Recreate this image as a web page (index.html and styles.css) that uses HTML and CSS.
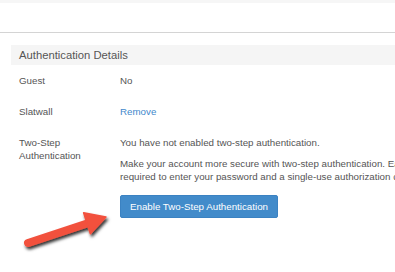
FILE: index.html
```html
<!DOCTYPE html>
<html>
<head>
<meta charset="utf-8">
<link rel="stylesheet" href="styles.css">
</head>
<body>
<div class="topband"></div>
<div class="topspace"></div>
<div class="content">
  <div class="panel">
    <div class="panel-heading">Authentication Details</div>
    <div class="row">
      <div class="label">Guest</div>
      <div class="value">No</div>
    </div>
    <div class="row">
      <div class="label">Slatwall</div>
      <div class="value"><a class="link" href="#">Remove</a></div>
    </div>
    <div class="row">
      <div class="label">Two-Step<br>Authentication</div>
      <div class="value">
        <p class="first">You have not enabled two-step authentication.</p>
        <p class="desc">Make your account more secure with two-step authentication. Each time you sign in, you will be<br>required to enter your password and a single-use authorization code from your phone.</p>
        <button class="btn">Enable Two-Step Authentication</button>
      </div>
    </div>
  </div>
</div>
<svg class="arrow" width="120" height="60" viewBox="0 200 120 60">
  <defs>
    <filter id="sh" x="-20%" y="-40%" width="150%" height="200%">
      <feDropShadow dx="1.5" dy="2.5" stdDeviation="1.6" flood-color="#000" flood-opacity="0.8"/>
    </filter>
  </defs>
  <g filter="url(#sh)" fill="#f2513e" stroke="#f2513e">
    <line x1="28" y1="243" x2="90" y2="222.5" stroke-width="8" stroke-linecap="round"/>
    <polygon points="106,217 83.6,212.8 90.4,233.7" stroke-width="1.5" stroke-linejoin="round"/>
  </g>
</svg>
</body>
</html>
```
FILE: styles.css
```css
html, body {
  margin: 0;
  padding: 0;
  background: #fff;
  overflow: hidden;
  width: 395px;
  height: 272px;
}
body {
  font-family: "Liberation Sans", Arial, sans-serif;
  font-size: 9.75px;
  line-height: 13px;
  color: #555;
  position: relative;
}
.topband {
  height: 3px;
  background: #f6f6f6;
}
.topspace {
  height: 29px;
  border-bottom: 1px solid #d4d4d4;
}
.content {
  padding: 12px 0 0 11px;
}
.panel {
  width: 600px;
}
.panel-heading {
  background: #f5f5f5;
  height: 20px;
  line-height: 21px;
  padding-left: 8px;
  font-size: 11.25px;
  color: #555;
}
.row {
  display: flex;
  padding: 9px 0 9px 8px;
}
.label {
  width: 101px;
  flex: none;
}
.value {
  flex: 1;
}
.value p {
  margin: 0;
}
.value .desc {
  margin-top: 8px;
  white-space: nowrap;
}
.link {
  color: #3f88cc;
  text-decoration: none;
}
.btn {
  display: block;
  margin-top: 12px;
  height: 23px;
  width: 158px;
  padding: 0;
  border: 1px solid #3b82c2;
  border-radius: 2px;
  background: #428bca;
  color: #fff;
  font-family: "Liberation Sans", Arial, sans-serif;
  font-size: 9.75px;
  line-height: 21px;
}
.arrow {
  position: absolute;
  left: 0;
  top: 200px;
}
```
